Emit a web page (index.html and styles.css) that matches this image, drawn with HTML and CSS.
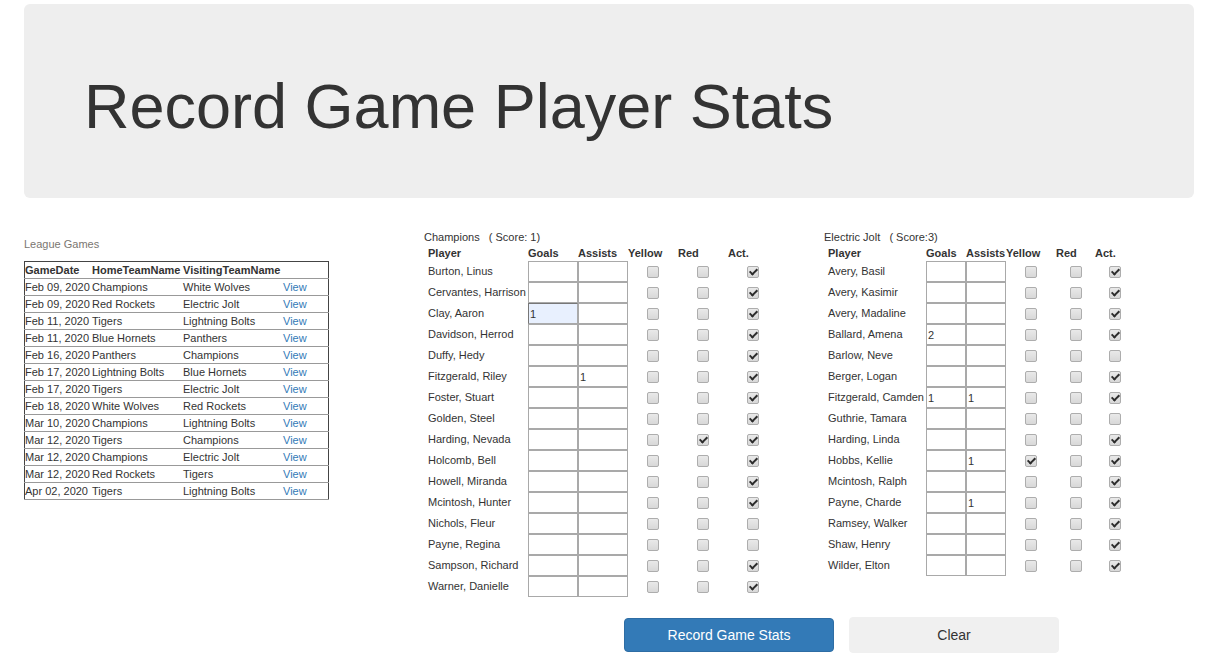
FILE: index.html
```html
<!DOCTYPE html>
<html lang="en">
<head>
<meta charset="utf-8">
<title>Record Game Player Stats</title>
<link rel="stylesheet" href="styles.css">
</head>
<body>
<div class="container">
  <div class="jumbotron">
    <h1>Record Game Player Stats</h1>
  </div>

  <div class="main">
    <div class="games">
      <div class="games-label">League Games</div>
      <table class="games-table">
        <thead>
          <tr><th class="c-date">GameDate</th><th class="c-home">HomeTeamName</th><th class="c-visit">VisitingTeamName</th><th class="c-view"></th></tr>
        </thead>
        <tbody>
          <tr><td>Feb 09, 2020</td><td>Champions</td><td>White Wolves</td><td><a href="#">View</a></td></tr>
          <tr><td>Feb 09, 2020</td><td>Red Rockets</td><td>Electric Jolt</td><td><a href="#">View</a></td></tr>
          <tr><td>Feb 11, 2020</td><td>Tigers</td><td>Lightning Bolts</td><td><a href="#">View</a></td></tr>
          <tr><td>Feb 11, 2020</td><td>Blue Hornets</td><td>Panthers</td><td><a href="#">View</a></td></tr>
          <tr><td>Feb 16, 2020</td><td>Panthers</td><td>Champions</td><td><a href="#">View</a></td></tr>
          <tr><td>Feb 17, 2020</td><td>Lightning Bolts</td><td>Blue Hornets</td><td><a href="#">View</a></td></tr>
          <tr><td>Feb 17, 2020</td><td>Tigers</td><td>Electric Jolt</td><td><a href="#">View</a></td></tr>
          <tr><td>Feb 18, 2020</td><td>White Wolves</td><td>Red Rockets</td><td><a href="#">View</a></td></tr>
          <tr><td>Mar 10, 2020</td><td>Champions</td><td>Lightning Bolts</td><td><a href="#">View</a></td></tr>
          <tr><td>Mar 12, 2020</td><td>Tigers</td><td>Champions</td><td><a href="#">View</a></td></tr>
          <tr><td>Mar 12, 2020</td><td>Champions</td><td>Electric Jolt</td><td><a href="#">View</a></td></tr>
          <tr><td>Mar 12, 2020</td><td>Red Rockets</td><td>Tigers</td><td><a href="#">View</a></td></tr>
          <tr><td>Apr 02, 2020</td><td>Tigers</td><td>Lightning Bolts</td><td><a href="#">View</a></td></tr>
        </tbody>
      </table>
    </div>

    <div class="team">
      <div class="team-title">Champions&nbsp;&nbsp; ( Score: 1)</div>
      <table class="stats stats-home">
        <thead>
          <tr><th class="c-player">Player</th><th class="c-num">Goals</th><th class="c-num">Assists</th><th class="c-cb">Yellow</th><th class="c-cb">Red</th><th class="c-cb">Act.</th></tr>
        </thead>
        <tbody>
          <tr><td class="name">Burton, Linus</td><td><input type="text" value=""></td><td><input type="text" value=""></td><td><span class="cb"></span></td><td><span class="cb"></span></td><td><span class="cb on"></span></td></tr>
          <tr><td class="name">Cervantes, Harrison</td><td><input type="text" value=""></td><td><input type="text" value=""></td><td><span class="cb"></span></td><td><span class="cb"></span></td><td><span class="cb on"></span></td></tr>
          <tr><td class="name">Clay, Aaron</td><td><input type="text" class="filled" value="1"></td><td><input type="text" value=""></td><td><span class="cb"></span></td><td><span class="cb"></span></td><td><span class="cb on"></span></td></tr>
          <tr><td class="name">Davidson, Herrod</td><td><input type="text" value=""></td><td><input type="text" value=""></td><td><span class="cb"></span></td><td><span class="cb"></span></td><td><span class="cb on"></span></td></tr>
          <tr><td class="name">Duffy, Hedy</td><td><input type="text" value=""></td><td><input type="text" value=""></td><td><span class="cb"></span></td><td><span class="cb"></span></td><td><span class="cb on"></span></td></tr>
          <tr><td class="name">Fitzgerald, Riley</td><td><input type="text" value=""></td><td><input type="text" value="1"></td><td><span class="cb"></span></td><td><span class="cb"></span></td><td><span class="cb on"></span></td></tr>
          <tr><td class="name">Foster, Stuart</td><td><input type="text" value=""></td><td><input type="text" value=""></td><td><span class="cb"></span></td><td><span class="cb"></span></td><td><span class="cb on"></span></td></tr>
          <tr><td class="name">Golden, Steel</td><td><input type="text" value=""></td><td><input type="text" value=""></td><td><span class="cb"></span></td><td><span class="cb"></span></td><td><span class="cb on"></span></td></tr>
          <tr><td class="name">Harding, Nevada</td><td><input type="text" value=""></td><td><input type="text" value=""></td><td><span class="cb"></span></td><td><span class="cb on"></span></td><td><span class="cb on"></span></td></tr>
          <tr><td class="name">Holcomb, Bell</td><td><input type="text" value=""></td><td><input type="text" value=""></td><td><span class="cb"></span></td><td><span class="cb"></span></td><td><span class="cb on"></span></td></tr>
          <tr><td class="name">Howell, Miranda</td><td><input type="text" value=""></td><td><input type="text" value=""></td><td><span class="cb"></span></td><td><span class="cb"></span></td><td><span class="cb on"></span></td></tr>
          <tr><td class="name">Mcintosh, Hunter</td><td><input type="text" value=""></td><td><input type="text" value=""></td><td><span class="cb"></span></td><td><span class="cb"></span></td><td><span class="cb on"></span></td></tr>
          <tr><td class="name">Nichols, Fleur</td><td><input type="text" value=""></td><td><input type="text" value=""></td><td><span class="cb"></span></td><td><span class="cb"></span></td><td><span class="cb"></span></td></tr>
          <tr><td class="name">Payne, Regina</td><td><input type="text" value=""></td><td><input type="text" value=""></td><td><span class="cb"></span></td><td><span class="cb"></span></td><td><span class="cb"></span></td></tr>
          <tr><td class="name">Sampson, Richard</td><td><input type="text" value=""></td><td><input type="text" value=""></td><td><span class="cb"></span></td><td><span class="cb"></span></td><td><span class="cb on"></span></td></tr>
          <tr><td class="name">Warner, Danielle</td><td><input type="text" value=""></td><td><input type="text" value=""></td><td><span class="cb"></span></td><td><span class="cb"></span></td><td><span class="cb on"></span></td></tr>
        </tbody>
      </table>
    </div>

    <div class="team">
      <div class="team-title">Electric Jolt&nbsp;&nbsp; ( Score:3)</div>
      <table class="stats stats-away">
        <thead>
          <tr><th class="c-player">Player</th><th class="c-goals">Goals</th><th class="c-assists">Assists</th><th class="c-yellow">Yellow</th><th class="c-red">Red</th><th class="c-act">Act.</th></tr>
        </thead>
        <tbody>
          <tr><td class="name">Avery, Basil</td><td><input type="text" value=""></td><td><input type="text" value=""></td><td><span class="cb"></span></td><td><span class="cb"></span></td><td><span class="cb on"></span></td></tr>
          <tr><td class="name">Avery, Kasimir</td><td><input type="text" value=""></td><td><input type="text" value=""></td><td><span class="cb"></span></td><td><span class="cb"></span></td><td><span class="cb on"></span></td></tr>
          <tr><td class="name">Avery, Madaline</td><td><input type="text" value=""></td><td><input type="text" value=""></td><td><span class="cb"></span></td><td><span class="cb"></span></td><td><span class="cb on"></span></td></tr>
          <tr><td class="name">Ballard, Amena</td><td><input type="text" value="2"></td><td><input type="text" value=""></td><td><span class="cb"></span></td><td><span class="cb"></span></td><td><span class="cb on"></span></td></tr>
          <tr><td class="name">Barlow, Neve</td><td><input type="text" value=""></td><td><input type="text" value=""></td><td><span class="cb"></span></td><td><span class="cb"></span></td><td><span class="cb"></span></td></tr>
          <tr><td class="name">Berger, Logan</td><td><input type="text" value=""></td><td><input type="text" value=""></td><td><span class="cb"></span></td><td><span class="cb"></span></td><td><span class="cb on"></span></td></tr>
          <tr><td class="name">Fitzgerald, Camden</td><td><input type="text" value="1"></td><td><input type="text" value="1"></td><td><span class="cb"></span></td><td><span class="cb"></span></td><td><span class="cb on"></span></td></tr>
          <tr><td class="name">Guthrie, Tamara</td><td><input type="text" value=""></td><td><input type="text" value=""></td><td><span class="cb"></span></td><td><span class="cb"></span></td><td><span class="cb"></span></td></tr>
          <tr><td class="name">Harding, Linda</td><td><input type="text" value=""></td><td><input type="text" value=""></td><td><span class="cb"></span></td><td><span class="cb"></span></td><td><span class="cb on"></span></td></tr>
          <tr><td class="name">Hobbs, Kellie</td><td><input type="text" value=""></td><td><input type="text" value="1"></td><td><span class="cb on"></span></td><td><span class="cb"></span></td><td><span class="cb on"></span></td></tr>
          <tr><td class="name">Mcintosh, Ralph</td><td><input type="text" value=""></td><td><input type="text" value=""></td><td><span class="cb"></span></td><td><span class="cb"></span></td><td><span class="cb on"></span></td></tr>
          <tr><td class="name">Payne, Charde</td><td><input type="text" value=""></td><td><input type="text" value="1"></td><td><span class="cb"></span></td><td><span class="cb"></span></td><td><span class="cb on"></span></td></tr>
          <tr><td class="name">Ramsey, Walker</td><td><input type="text" value=""></td><td><input type="text" value=""></td><td><span class="cb"></span></td><td><span class="cb"></span></td><td><span class="cb on"></span></td></tr>
          <tr><td class="name">Shaw, Henry</td><td><input type="text" value=""></td><td><input type="text" value=""></td><td><span class="cb"></span></td><td><span class="cb"></span></td><td><span class="cb on"></span></td></tr>
          <tr><td class="name">Wilder, Elton</td><td><input type="text" value=""></td><td><input type="text" value=""></td><td><span class="cb"></span></td><td><span class="cb"></span></td><td><span class="cb on"></span></td></tr>
        </tbody>
      </table>
    </div>
  </div>

  <div class="actions">
    <button type="button" class="btn btn-primary">Record Game Stats</button>
    <button type="button" class="btn btn-default">Clear</button>
  </div>
</div>
</body>
</html>
```

FILE: styles.css
```css
html, body {
  margin: 0;
  padding: 0;
  background: #fff;
}

body {
  font-family: "Liberation Sans", Arial, Helvetica, sans-serif;
  font-size: 11px;
  color: #333;
  overflow: hidden;
}

.container {
  width: 1170px;
  margin: 0 auto;
}

.jumbotron {
  margin-top: 4px;
  background: #eeeeee;
  border-radius: 6px;
  padding: 67px 60px 57px;
}

.jumbotron h1 {
  margin: 0;
  font-size: 63px;
  line-height: 70px;
  font-weight: normal;
  color: #333;
}

.main {
  display: grid;
  grid-template-columns: 400px 400px 1fr;
  margin-top: 32px;
}

/* League games */
.games {
  padding-top: 7px;
}

.games-label {
  line-height: 14px;
  color: #7a7671;
  margin-bottom: 10px;
}

.games-table {
  border-collapse: collapse;
  border: 1px solid #444;
  width: 305px;
  table-layout: fixed;
}

.games-table th,
.games-table td {
  padding: 0;
  height: 16px;
  line-height: 16px;
  text-align: left;
  white-space: nowrap;
  border-bottom: 1px solid #999;
  color: #333;
}

.games-table th {
  font-weight: bold;
}

.games-table .c-date { width: 67px; }
.games-table .c-home { width: 91px; }
.games-table .c-visit { width: 100px; }

.games-table a {
  color: #337ab7;
  text-decoration: none;
}

/* Team stats */
.team-title {
  line-height: 15px;
  color: #333;
}

.stats {
  border-collapse: collapse;
  table-layout: fixed;
}

.stats th {
  font-weight: bold;
  text-align: left;
  height: 16px;
  line-height: 16px;
  padding: 0;
  white-space: nowrap;
}

.stats td {
  padding: 0;
  height: 21px;
  text-align: center;
  vertical-align: middle;
}

.stats .c-player {
  padding-left: 4px;
}

.stats td.name {
  text-align: left;
  padding-left: 4px;
  line-height: 13px;
  white-space: nowrap;
}

.stats-home .c-player { width: 100px; }
.stats-home .c-num,
.stats-home .c-cb { width: 50px; }

.stats-away .c-player { width: 98px; }
.stats-away .c-goals { width: 40px; }
.stats-away .c-assists { width: 40px; }
.stats-away .c-yellow { width: 50px; }
.stats-away .c-red { width: 39px; }
.stats-away .c-act { width: 40px; }

.stats input {
  display: block;
  box-sizing: border-box;
  width: 100%;
  height: 21px;
  margin: 0;
  padding: 0 1px;
  border: 1px solid #a9a9a9;
  border-radius: 0;
  background: #fff;
  font-family: "Liberation Sans", Arial, sans-serif;
  font-size: 11px;
  color: #333;
  outline: none;
}

.stats input.filled {
  background: #e8f0fe;
  border-color: #777 #a9a9a9 #a9a9a9 #777;
}

.cb {
  position: relative;
  display: inline-block;
  vertical-align: middle;
  box-sizing: border-box;
  width: 12px;
  height: 12px;
  border: 1px solid #adadad;
  border-radius: 2px;
  background: linear-gradient(#e9e9e9, #d8d8d8);
}

.cb.on::after {
  content: "";
  position: absolute;
  left: 3px;
  top: 0px;
  width: 3px;
  height: 6px;
  border: solid #2d2d2d;
  border-width: 0 2px 2px 0;
  transform: rotate(45deg);
}

/* Buttons */
.actions {
  display: flex;
  gap: 15px;
  margin-top: 21px;
  padding-left: 600px;
}

.btn {
  width: 210px;
  height: 34px;
  border-radius: 4px;
  font-family: "Liberation Sans", Arial, sans-serif;
  font-size: 14px;
  line-height: 20px;
  padding: 6px 12px;
  cursor: pointer;
}

.btn-primary {
  background: #337ab7;
  border: 1px solid #2e6da4;
  color: #fff;
}

.btn-default {
  background: #f0f0f0;
  border: 1px solid #f0f0f0;
  color: #333;
  height: 36px;
  margin-top: -1px;
}
```
